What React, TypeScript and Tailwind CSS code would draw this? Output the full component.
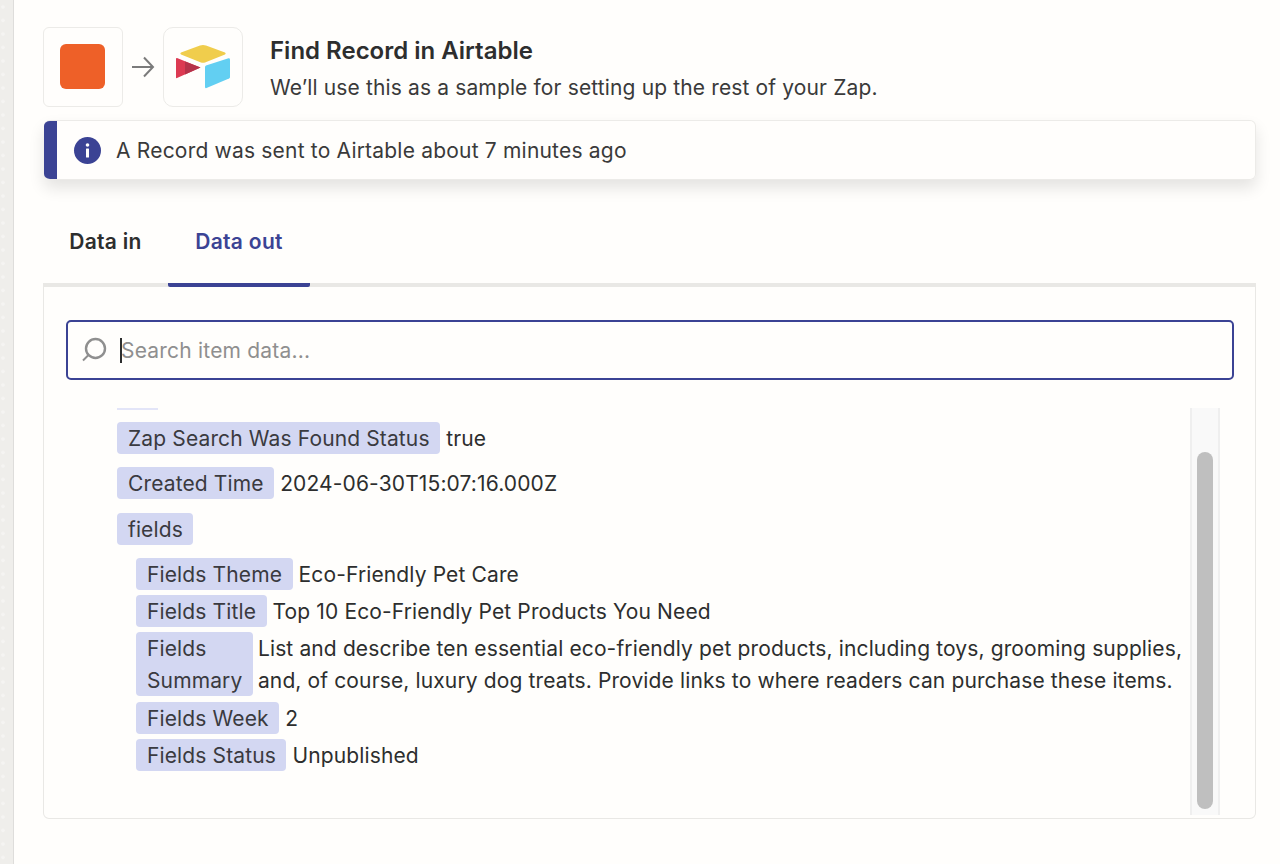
import React from 'react';

const font = "font-['Inter',sans-serif]";

const Tag = ({ children, className = '' }: { children: React.ReactNode; className?: string }) => (
  <span className={`bg-[#d3d7f2] rounded-[4px] pl-[11px] pr-[10.5px] pt-[1px] text-[#3a3a40] shrink-0 ${className}`}>{children}</span>
);

const AirtableLogo = () => (
  <svg width="54" height="46" viewBox="0 0 54 46">
    <path d="M24 1.500 Q27 0.500 30 1.500 L49 8.500 Q50.500 9.500 49 10.500 L29 18.500 Q27 19.200 25 18.500 L5 10.500 Q3.500 9.500 5 8.500 Z" fill="#f0cd4c" />
    <path d="M30 21.500 L52.500 14.200 Q54 14 54 15.500 L54 33 Q54 34 53 34.500 L30.500 44 Q29 44.500 29 43 L29 23 Q29 22 30 21.500 Z" fill="#62cff2" />
    <path d="M1 14 L24.500 23.500 L1 34 Q0 34.500 0 33.500 L0 15 Q0 13.800 1 14 Z" fill="#dc3a52" />
    <path d="M9 17.500 L24.500 23.500 L9 30.500 Z" fill="#b5334a" />
  </svg>
);

const ArrowIcon = () => (
  <svg width="24" height="22" viewBox="0 0 24 22" fill="none" stroke="#7b7b7b" strokeWidth="2">
    <path d="M1 11 H22" />
    <path d="M13 1.500 L22 11 L13 20.500" />
  </svg>
);

const SearchIcon = () => (
  <svg width="26" height="26" viewBox="0 0 26 26" fill="none" stroke="#8f8f8f" className="shrink-0">
    <circle cx="14.500" cy="11.500" r="9.500" strokeWidth="2.400" />
    <path d="M7.500 18 L2 23.500" strokeWidth="2" />
  </svg>
);

const Row = ({ label, value, className = '' }: { label: string; value: string; className?: string }) => (
  <div className={`flex items-center gap-[6px] h-[32px] ${className}`}>
    <Tag className="h-[32px] leading-[32px]">{label}</Tag>
    <span className="pt-[2px] leading-[32px]">{value}</span>
  </div>
);

export default function App() {
  return (
    <div className={`${font} flex h-[864px] w-[1280px] overflow-hidden bg-[#fffefc] text-[#2d2e2e]`}>
      <div className="w-[14px] shrink-0 bg-[#efeeeb] border-r border-[#dedddb] bg-[radial-gradient(circle_at_3px_7px,#f5f4f2_1.5px,transparent_2px)] bg-[length:14px_13.5px]" />
      <div className="flex-1 min-w-0 pl-[29px] pr-[24px] pt-[27px]">
        <div className="flex items-center h-[80px]">
          <div className="w-[80px] h-[80px] flex items-center justify-center pr-[1px] pb-[1px] bg-[#fffefc] border border-[#ecebe8] rounded-[6px]">
            <div className="w-[45px] h-[45px] rounded-[6px] bg-[#ee6028]" />
          </div>
          <div className="w-[40px] flex justify-center">
            <ArrowIcon />
          </div>
          <div className="w-[80px] h-[80px] flex items-center justify-center bg-[#fffefc] border border-[#ecebe8] rounded-[10px]">
            <AirtableLogo />
          </div>
          <div className="ml-[27px] pt-[4px]">
            <div className="text-[24px] font-semibold leading-[30px]">Find Record in Airtable</div>
            <div className="text-[21px] leading-[28px] mt-[8px] text-[#3a3a3a] tracking-[0.14px]">We’ll use this as a sample for setting up the rest of your Zap.</div>
          </div>
        </div>

        <div className="flex items-center h-[60px] mt-[13px] ml-[1px] rounded-[6px] border border-[#ecebe8] border-l-0 overflow-hidden shadow-[0_8px_16px_rgba(0,0,0,0.11)]">
          <div className="w-[13px] h-full bg-[#3b4394] shrink-0" />
          <div className="w-[27px] h-[27px] ml-[17px] rounded-full bg-[#3b4394] flex items-center justify-center shrink-0">
            <svg width="5" height="15" viewBox="0 0 5 15" fill="#fffefc">
              <circle cx="2.500" cy="2" r="1.800" />
              <rect x="1" y="5.500" width="3" height="9" rx="0.500" />
            </svg>
          </div>
          <span className="ml-[15px] pt-[2px] text-[21px] text-[#3a3a3a] tracking-[0.2px]">A Record was sent to Airtable about 7 minutes ago</span>
        </div>

        <div className="flex h-[107px] text-[21px] font-semibold tracking-[0.3px]">
          <div className="w-[125px] flex justify-center pt-[46px]">Data in</div>
          <div className="w-[142px] flex justify-center pt-[46px] text-[#3b4394] border-b-[4px] border-[#3b4394] rounded-b-[2px]">Data out</div>
        </div>

        <div className="-mt-[4px] h-[536px] border border-[#e9e8e5] border-t-[4px] rounded-b-[6px] flex flex-col pl-[22px] pr-[21px] pt-[33px]">
          <div className="h-[60px] border-2 border-[#3b4394] rounded-[5px] flex items-center pl-[13px] shrink-0">
            <SearchIcon />
            <div className="w-[2px] h-[25px] bg-[#2d2e2e] ml-[13px]" />
            <span className="text-[21px] pt-[2px] text-[#8f8f8f] tracking-[0.2px] -ml-[1px]">Search item data...</span>
          </div>

          <div className="flex flex-1 min-h-0 mt-[28px] pb-[3px]">
            <div className="flex-1 min-w-0 text-[21px] tracking-[0.13px] relative overflow-hidden">
              <div className="absolute left-[51px] top-0 w-[41px] h-[2px] bg-[#e3e5f8]" />
              <div className="pl-[51px] pt-[14px] flex flex-col gap-[13px]">
                <Row label="Zap Search Was Found Status" value="true" />
                <Row label="Created Time" value="2024-06-30T15:07:16.000Z" />
                <Row label="fields" value="" className="mt-[1px]" />
              </div>
              <div className="pl-[70px] pt-[13px] flex flex-col gap-[5px]">
                <Row label="Fields Theme" value="Eco-Friendly Pet Care" />
                <Row label="Fields Title" value="Top 10 Eco-Friendly Pet Products You Need" />
                <div className="flex gap-[5px]">
                  <Tag className="h-[64px] leading-[32px] whitespace-pre-line">{'Fields\nSummary'}</Tag>
                  <span className="pt-[1px] leading-[32px] whitespace-pre-line">{'List and describe ten essential eco-friendly pet products, including toys, grooming supplies,\nand, of course, luxury dog treats. Provide links to where readers can purchase these items.'}</span>
                </div>
                <Row label="Fields Week" value="2" />
                <Row label="Fields Status" value="Unpublished" />
              </div>
            </div>
            <div className="w-[30px] mr-[14px] shrink-0 bg-[#f9f9f9] border-x-2 border-[#efefef] flex justify-center pt-[44px] pb-[6px]">
              <div className="w-[16px] h-full rounded-full bg-[#bfbfbf]" />
            </div>
          </div>
        </div>
      </div>
    </div>
  );
}
